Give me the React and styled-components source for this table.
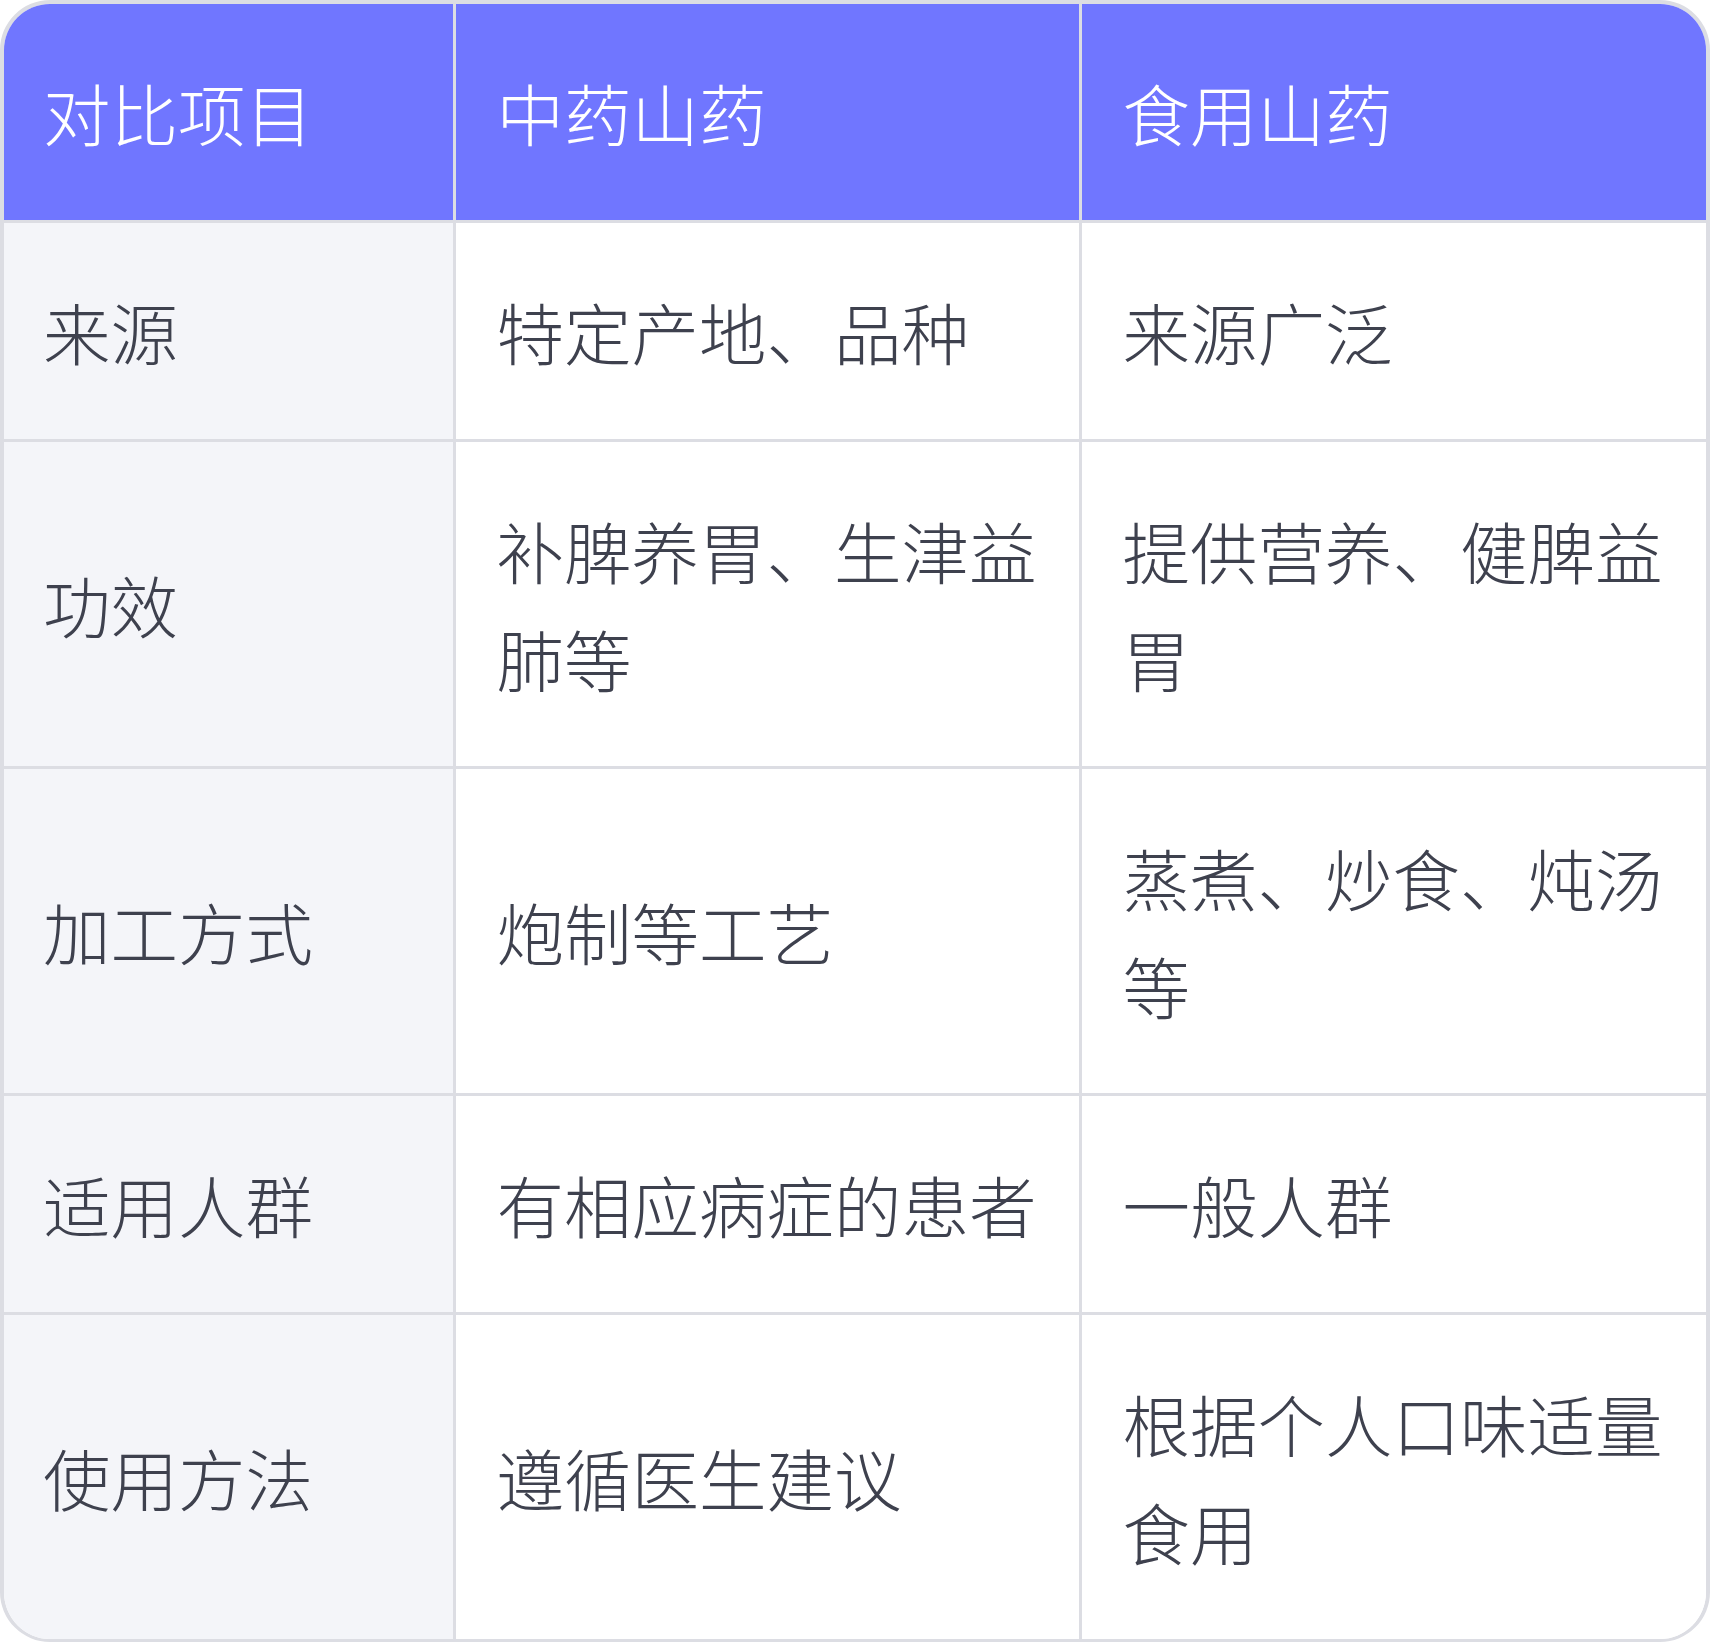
import React from 'react'
import styled, { createGlobalStyle } from 'styled-components'

const GlobalStyle = createGlobalStyle`
    html, body {
        margin: 0;
        padding: 0;
        background: #ffffff;
    }
    body {
        font-family: "Noto Sans CJK SC", "Noto Sans", sans-serif;
    }
`

const Wrapper = styled.div`
    width: 100%;
    box-sizing: border-box;
    border: 4px solid #dcdde3;
    border-bottom-width: 3px;
    border-radius: 50px;
    overflow: hidden;
`

const Table = styled.table`
    width: 100%;
    border-collapse: collapse;
    table-layout: fixed;
    font-size: 67.5px;
    line-height: 108px;
    font-weight: 300;
    color: #3e414e;

    col.label {
        width: 450px;
    }

    tr > *:first-child {
        padding-left: 39px;
    }

    tr > *:last-child {
        border-right: none;
    }

    tbody tr:last-child td {
        border-bottom: none;
    }
`

const HeadCell = styled.th`
    background-color: #7076ff;
    color: #ffffff;
    font-weight: 300;
    text-align: left;
    vertical-align: middle;
    padding: 54px 38px 54px 41px;
    border-right: 3px solid #dcdde3;
    border-bottom: 3px solid #dcdde3;
    white-space: nowrap;
`

const Cell = styled.td`
    background-color: ${props => props.$label ? '#f4f5f9' : '#ffffff'};
    vertical-align: middle;
    padding: 54px 38px 54px 41px;
    border-right: 3px solid #dcdde3;
    border-bottom: 3px solid #dcdde3;
    word-break: break-all;
`

const rows = [
    ['来源', '特定产地、品种', '来源广泛'],
    ['功效', '补脾养胃、生津益肺等', '提供营养、健脾益胃'],
    ['加工方式', '炮制等工艺', '蒸煮、炒食、炖汤等'],
    ['适用人群', '有相应病症的患者', '一般人群'],
    ['使用方法', '遵循医生建议', '根据个人口味适量食用'],
]

export default function App() {
    return (
        <>
            <GlobalStyle />
            <Wrapper>
                <Table>
                    <colgroup>
                        <col className='label' />
                        <col />
                        <col />
                    </colgroup>
                    <thead>
                        <tr>
                            <HeadCell>对比项目</HeadCell>
                            <HeadCell>中药山药</HeadCell>
                            <HeadCell>食用山药</HeadCell>
                        </tr>
                    </thead>
                    <tbody>
                        {rows.map((row, index) => (
                            <tr key={index}>
                                <Cell $label>{row[0]}</Cell>
                                <Cell>{row[1]}</Cell>
                                <Cell>{row[2]}</Cell>
                            </tr>
                        ))}
                    </tbody>
                </Table>
            </Wrapper>
        </>
    )
}
